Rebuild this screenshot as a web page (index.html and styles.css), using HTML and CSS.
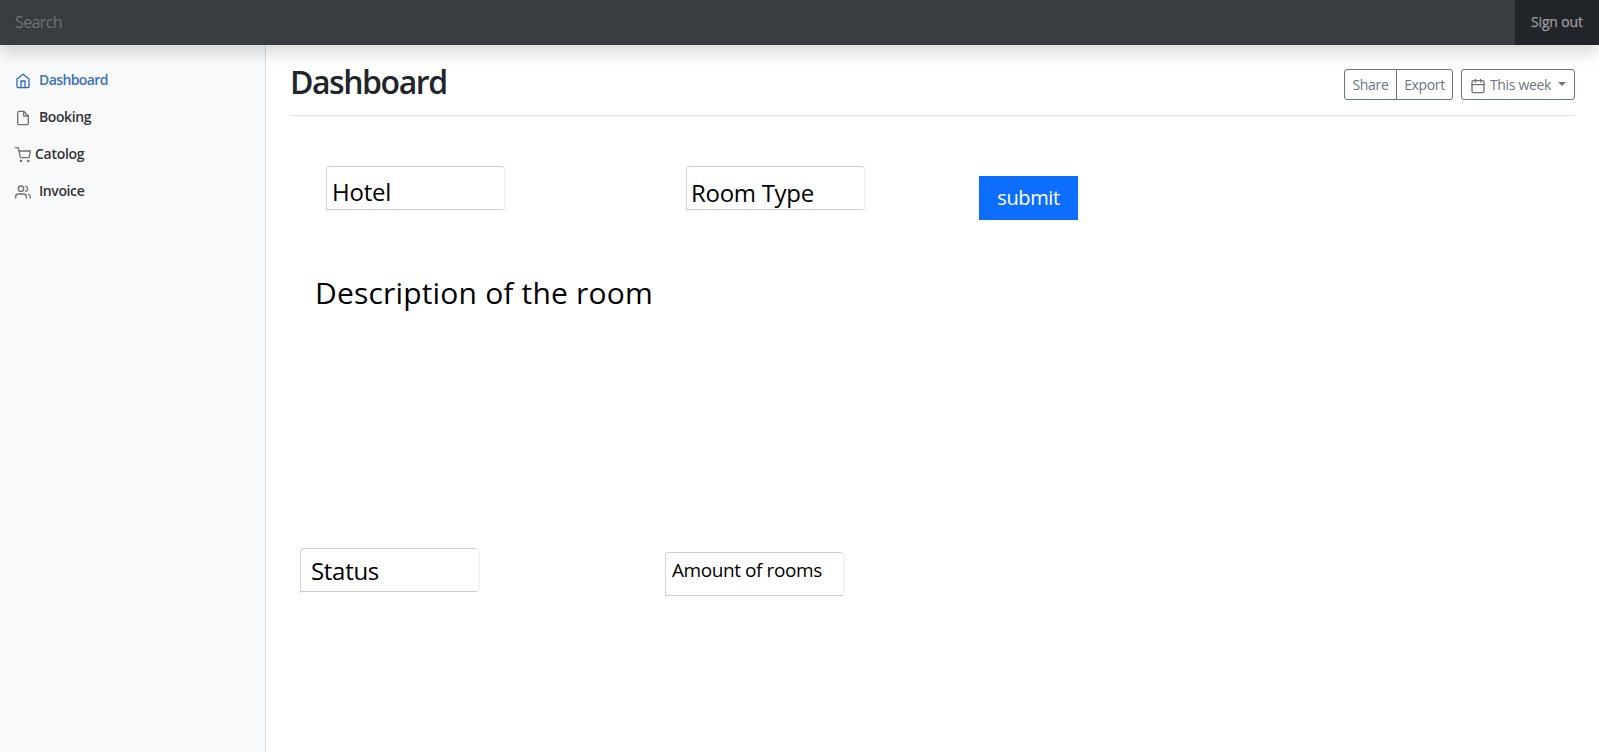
FILE: index.html
```html
<!DOCTYPE html>
<html lang="en">
<head>
<meta charset="utf-8">
<title>Dashboard</title>
<link rel="stylesheet" href="styles.css">
</head>
<body>
<header class="topbar">
  <div class="search"><span class="t-search">Search</span></div>
  <a class="signout"><span class="t-signout">Sign out</span></a>
</header>
<div class="layout">
  <nav class="sidebar">
    <a class="nav-link active"><svg class="icon" viewBox="0 0 24 24"><path d="M3 9l9-7 9 7v11a2 2 0 0 1-2 2H5a2 2 0 0 1-2-2z"/><path d="M9 22V12h6v10"/></svg><span class="t-dash">Dashboard</span></a>
    <a class="nav-link"><svg class="icon" viewBox="0 0 24 24"><path d="M13 2H6a2 2 0 0 0-2 2v16a2 2 0 0 0 2 2h12a2 2 0 0 0 2-2V9z"/><path d="M13 2v7h7"/></svg><span class="t-book">Booking</span></a>
    <a class="nav-link tight"><svg class="icon" viewBox="0 0 24 24"><circle cx="9" cy="21" r="1"/><circle cx="20" cy="21" r="1"/><path d="M1 1h4l2.68 13.39a2 2 0 0 0 2 1.61h9.72a2 2 0 0 0 2-1.61L23 6H6"/></svg><span class="t-cat">Catolog</span></a>
    <a class="nav-link"><svg class="icon" viewBox="0 0 24 24"><path d="M17 21v-2a4 4 0 0 0-4-4H5a4 4 0 0 0-4 4v2"/><circle cx="9" cy="7" r="4"/><path d="M23 21v-2a4 4 0 0 0-3-3.87"/><path d="M16 3.13a4 4 0 0 1 0 7.75"/></svg><span class="t-inv">Invoice</span></a>
  </nav>
  <main class="main">
    <div class="heading">
      <h1 class="title">Dashboard</h1>
      <div class="toolbar">
        <div class="group">
          <button class="btn share">Share</button><button class="btn export">Export</button>
        </div>
        <button class="btn week"><svg class="icon" viewBox="0 0 24 24"><rect x="3" y="4" width="18" height="18" rx="2"/><path d="M16 2v4M8 2v4M3 10h18"/></svg><span>This week</span><i class="caret"></i></button>
      </div>
    </div>
    <div class="filters">
      <div class="field"><span class="t-hotel">Hotel</span></div>
      <div class="field room"><span class="t-room">Room Type</span></div>
      <button class="submit"><span class="t-submit">submit</span></button>
    </div>
    <p class="description">Description of the room</p>
    <div class="summary">
      <div class="field status"><span class="t-status">Status</span></div>
      <div class="field amount"><span class="t-amount">Amount of rooms</span></div>
    </div>
  </main>
</div>
</body>
</html>
```
FILE: styles.css
```css
* { box-sizing: border-box; }
body { margin: 0; height: 752px; overflow: hidden; display: flex; flex-direction: column; background: #fff; font-family: "Open Sans", "Noto Sans", sans-serif; color: #212529; }
.topbar { position: relative; flex: none; height: 45px; display: flex; background: #212529; box-shadow: 0 8px 16px rgba(0,0,0,.15); }
.search { width: 1515px; padding: 10px 15px; background: #393c41; color: #6c7377; font-size: 16px; line-height: 24px; letter-spacing: -.6px; }
.signout { flex: 1; padding: 10px 0 0 16px; color: #9b9da0; font-size: 14px; line-height: 24px; letter-spacing: -.15px; -webkit-text-stroke: .25px #9b9da0; white-space: nowrap; }
.layout { flex: 1; display: flex; }
.sidebar { width: 266px; padding-top: 16px; background: #f8f9fb; border-right: 1px solid #d9dbdd; display: flex; flex-direction: column; }
.nav-link { height: 37px; padding: 0 15px; display: flex; align-items: center; gap: 8px; font-size: 14px; font-weight: 600; line-height: 21px; color: #333; letter-spacing: -.4px; }
.nav-link.tight { gap: 4px; }
.t-dash { letter-spacing: -.6px; }
.t-cat { letter-spacing: -.3px; }
.icon { flex: none; width: 16px; height: 16px; fill: none; stroke: #727272; stroke-width: 2; stroke-linecap: round; stroke-linejoin: round; }
.nav-link .icon { position: relative; top: 1px; }
.active { color: #3b70bd; }
.active .icon { stroke: #2f6cbf; }
.main { flex: 1; padding: 0 24px; }
.heading { height: 71px; display: flex; justify-content: space-between; border-bottom: 1px solid #dee2e6; }
.title { margin: 17px 0 0; font-size: 32px; font-weight: 600; line-height: 40px; letter-spacing: -1.45px; }
.toolbar { display: flex; gap: 8px; padding-top: 24px; }
.group { display: flex; }
.btn { height: 31px; padding: 0; border: 1px solid #6c757d; border-radius: 3px; background: transparent; color: #6c757d; font: 14px/21px "Open Sans", sans-serif; letter-spacing: -.35px; white-space: nowrap; }
.share { width: 53px; border-radius: 3px 0 0 3px; }
.export { width: 57px; margin-left: -1px; border-radius: 0 3px 3px 0; }
.week { width: 114px; display: flex; align-items: center; padding-left: 8px; gap: 4px; }
.week .icon { position: relative; top: 1px; }
.caret { margin: -2px 0 0 3px; border: 4px solid transparent; border-top-color: #6c757d; border-bottom: 0; }
.filters { display: flex; padding: 50px 0 0 36px; align-items: flex-start; }
.field { position: relative; width: 178px; height: 44px; border: 1px solid #ccc; border-color: #ccc transparent #ccc #d5d5d5; border-radius: 4px 4px 0 0; box-shadow: 2px 0 #f4f4f4; padding: 10px 0 0 5px; background: #fff; color: #000; font: 24px/30px "Open Sans", sans-serif; white-space: nowrap; }
/* the left edge runs slightly past the bottom line */
.field::after { content: ""; position: absolute; left: -1px; top: 100%; width: 1px; height: 2px; background: #d5d5d5; }
.t-hotel { letter-spacing: -.2px; }
.room { margin-left: 182px; padding: 11px 0 0 4px; }
.t-room { letter-spacing: -.3px; }
.submit { width: 99px; height: 44px; margin: 10px 0 0 115px; padding: 0 0 1px; border: 0; background: #0d6efd; color: #fff; font: 20px/30px "Open Sans", sans-serif; letter-spacing: -.4px; }
.description { margin: 51px 0 0 25px; color: #000; font: 30px/44px "Open Sans", sans-serif; letter-spacing: .18px; white-space: nowrap; }
.summary { display: flex; padding: 233px 0 0 10px; }
.status { padding: 7px 0 0 10px; }
.t-status { letter-spacing: -.3px; }
.amount { margin: 4px 0 0 187px; padding: 2px 0 0 6px; font-size: 19px; letter-spacing: -.42px; }
```
